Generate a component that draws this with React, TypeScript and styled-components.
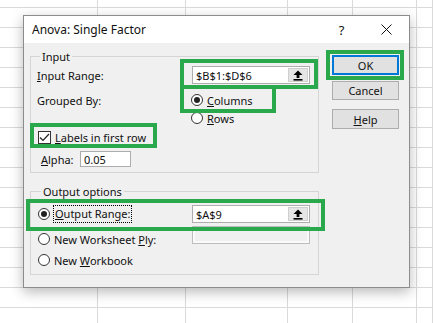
import * as React from 'react';
import styled, { createGlobalStyle } from 'styled-components';

const GlobalStyle = createGlobalStyle`
	html, body {
		margin: 0;
		padding: 0;
	}
	body {
		background: #fff;
		font-family: "Noto Sans", "Liberation Sans", sans-serif;
		color: #111;
	}
`;

const GREEN = '#2aa84c';

const Sheet = styled.div`
	position: relative;
	width: 433px;
	height: 323px;
	overflow: hidden;
	display: flex;
	background-color: #fff;
	background-image: linear-gradient(to bottom, transparent 19px, #dadada 19px);
	background-size: 100% 20px;
	background-position: 0 8px;
`;

const SheetColumn = styled.div<{ $width?: number }>`
	box-sizing: border-box;
	flex: ${(p) => (p.$width ? `0 0 ${p.$width}px` : '1 1 auto')};
	border-right: 1px solid #dadada;
	height: 100%;
`;

const Dialog = styled.div`
	position: absolute;
	left: 23px;
	top: 15px;
	width: 387px;
	height: 273px;
	box-sizing: border-box;
	border: 1px solid #8c8c8c;
	background: #f0f0f0;
	box-shadow: 0 4px 12px rgba(0, 0, 0, 0.28);
	display: flex;
	flex-direction: column;
`;

const TitleBar = styled.div`
	height: 27px;
	flex: 0 0 27px;
	background: #fff;
	display: flex;
	align-items: center;
	padding-left: 8px;
`;

const Title = styled.span`
	flex: 1;
	font-size: 12px;
`;

const TitleButton = styled.div`
	width: 45px;
	height: 27px;
	display: flex;
	align-items: center;
	justify-content: center;
	font-size: 13px;
	color: #111;
`;

const Body = styled.div`
	display: flex;
	padding: 6px 0 0 6px;
`;

const LeftColumn = styled.div`
	width: 289px;
	display: flex;
	flex-direction: column;
`;

const RightColumn = styled.div`
	width: 67px;
	margin-left: 13px;
	padding-top: 6px;
	display: flex;
	flex-direction: column;
`;

const Button = styled.div<{ $default?: boolean; $gap?: number; $height?: number }>`
	box-sizing: border-box;
	height: ${(p) => p.$height ?? 20}px;
	margin-top: ${(p) => p.$gap ?? 0}px;
	background: #e1e1e1;
	border: ${(p) => (p.$default ? '2px solid #0078d7' : '1px solid #adadad')};
	display: flex;
	align-items: center;
	justify-content: center;
	font-size: 11px;
`;

const Group = styled.fieldset<{ $pad: number; $gap?: number }>`
	margin: ${(p) => p.$gap ?? 0}px 0 0 0;
	padding: 0 0 5px ${(p) => p.$pad}px;
	border: 1px solid #d5d5d5;
	min-width: 0;
	font-size: 11px;
`;

const Legend = styled.legend`
	padding: 0 2px;
	margin-left: 3px;
	line-height: 15px;
	font-size: 11px;
`;

const Row = styled.div<{ $height: number; $gap?: number; $indent?: number; $align?: string }>`
	display: flex;
	align-items: ${(p) => p.$align ?? 'center'};
	height: ${(p) => p.$height}px;
	margin-top: ${(p) => p.$gap ?? 0}px;
	margin-left: ${(p) => p.$indent ?? 0}px;
`;

const FieldLabel = styled.div<{ $width?: number; $drop?: number }>`
	flex: 0 0 ${(p) => (p.$width ? `${p.$width}px` : 'auto')};
	display: flex;
	align-items: center;
	height: 18px;
	margin-top: ${(p) => p.$drop ?? 0}px;
	white-space: nowrap;
`;

const RadioStack = styled.div`
	display: flex;
	flex-direction: column;
	margin-left: -1px;
`;

const Option = styled.div`
	display: flex;
	align-items: center;
	gap: 4px;
	height: 18px;
	white-space: nowrap;
`;

const RadioCircle = styled.span<{ $checked?: boolean }>`
	box-sizing: border-box;
	width: 12px;
	height: 12px;
	border-radius: 50%;
	border: 1px solid #333;
	background: #fff;
	display: flex;
	align-items: center;
	justify-content: center;
	&::after {
		content: '';
		width: 6px;
		height: 6px;
		border-radius: 50%;
		background: ${(p) => (p.$checked ? '#222' : 'transparent')};
	}
`;

const CheckBox = styled.span`
	box-sizing: border-box;
	width: 13px;
	height: 13px;
	border: 1px solid #333;
	background: #fff;
	display: flex;
	align-items: center;
	justify-content: center;
`;

const Focus = styled.span`
	outline: 1px dotted #000;
	outline-offset: 0;
	padding: 0 1px;
	line-height: 16px;
`;

const TextField = styled.div<{ $width: number; $height: number; $disabled?: boolean }>`
	box-sizing: border-box;
	width: ${(p) => p.$width}px;
	height: ${(p) => p.$height}px;
	border: 1px solid ${(p) => (p.$disabled ? '#bdbdbd' : '#adadad')};
	background: ${(p) => (p.$disabled ? '#f0f0f0' : '#fff')};
	box-shadow: ${(p) => (p.$disabled ? 'inset 0 0 0 2px #fafafa' : 'none')};
	display: flex;
	align-items: center;
	padding-left: 3px;
	font-size: 11px;
	white-space: nowrap;
`;

const FieldText = styled.span`
	flex: 1;
`;

const CollapseButton = styled.span`
	box-sizing: border-box;
	width: 20px;
	height: calc(100% - 2px);
	margin-right: 1px;
	background: #e5e5e5;
	border: 1px solid #cfcfcf;
	display: flex;
	align-items: center;
	justify-content: center;
`;

const Highlight = styled.div<{ $x: number; $y: number; $w: number; $h: number }>`
	position: absolute;
	left: ${(p) => p.$x}px;
	top: ${(p) => p.$y}px;
	width: ${(p) => p.$w}px;
	height: ${(p) => p.$h}px;
	box-sizing: border-box;
	border: 4px solid ${GREEN};
	pointer-events: none;
`;

function UpArrow() {
	return (
		<svg width="10" height="11" viewBox="0 0 10 11">
			<path d="M5 0.5 L9.5 5 L6.4 5 L6.4 8 L3.6 8 L3.6 5 L0.5 5 Z" fill="#000" />
			<rect x="0.5" y="9" width="9" height="1.6" fill="#000" />
		</svg>
	);
}

function RefField({ value, disabled }: { value?: string; disabled?: boolean }) {
	return (
		<TextField $width={118} $height={18} $disabled={disabled}>
			<FieldText>{value}</FieldText>
			{!disabled && (
				<CollapseButton>
					<UpArrow />
				</CollapseButton>
			)}
		</TextField>
	);
}

function Radio({ checked, children }: { checked?: boolean; children: React.ReactNode }) {
	return (
		<Option>
			<RadioCircle $checked={checked} />
			{children}
		</Option>
	);
}

export default function App() {
	return (
		<Sheet>
			<GlobalStyle />
			<SheetColumn $width={98} />
			<SheetColumn $width={88} />
			<SheetColumn $width={102} />
			<SheetColumn $width={65} />
			<SheetColumn $width={64} />
			<SheetColumn />

			<Dialog>
				<TitleBar>
					<Title>Anova: Single Factor</Title>
					<TitleButton>?</TitleButton>
					<TitleButton>
						<svg width="11" height="11" viewBox="0 0 11 11">
							<path d="M0.5 0.5 L10.5 10.5 M10.5 0.5 L0.5 10.5" stroke="#111" strokeWidth="1" />
						</svg>
					</TitleButton>
				</TitleBar>
				<Body>
					<LeftColumn>
						<Group $pad={6}>
							<Legend>Input</Legend>
							<Row $height={18} $gap={2}>
								<FieldLabel $width={155}>
									<span>
										<u>I</u>nput Range:
									</span>
								</FieldLabel>
								<RefField value="$B$1:$D$6" />
							</Row>
							<Row $height={36} $gap={7} $align="flex-start">
								<FieldLabel $width={155}>Grouped By:</FieldLabel>
								<RadioStack>
									<Radio checked>
										<span>
											<u>C</u>olumns
										</span>
									</Radio>
									<Radio>
										<span>
											<u>R</u>ows
										</span>
									</Radio>
								</RadioStack>
							</Row>
							<Row $height={18} $gap={1} $indent={1}>
								<Option>
									<CheckBox>
										<svg width="11" height="9" viewBox="0 0 11 9">
											<path d="M1 4.5 L4 7.5 L10 1" fill="none" stroke="#222" strokeWidth="1.2" />
										</svg>
									</CheckBox>
									<span>
										<u>L</u>abels in first row
									</span>
								</Option>
							</Row>
							<Row $height={16} $gap={5} $indent={4}>
								<FieldLabel $width={39}>
									<span>
										<u>A</u>lpha:
									</span>
								</FieldLabel>
								<TextField $width={51} $height={16}>
									0.05
								</TextField>
							</Row>
						</Group>

						<Group $pad={7} $gap={11}>
							<Legend>Output options</Legend>
							<Row $height={20} $gap={5}>
								<FieldLabel $width={154}>
									<Radio checked>
										<Focus>
											<u>O</u>utput Range:
										</Focus>
									</Radio>
								</FieldLabel>
								<RefField value="$A$9" />
							</Row>
							<Row $height={22} $gap={2} $align="flex-start">
								<FieldLabel $width={154} $drop={4}>
									<Radio>
										<span>
											New Worksheet <u>P</u>ly:
										</span>
									</Radio>
								</FieldLabel>
								<RefField disabled />
							</Row>
							<Row $height={18} $gap={3}>
								<Radio>
									<span>
										New <u>W</u>orkbook
									</span>
								</Radio>
							</Row>
						</Group>
					</LeftColumn>

					<RightColumn>
						<Button $default>OK</Button>
						<Button $gap={6} $height={19}>
							Cancel
						</Button>
						<Button $gap={9}>
							<span>
								<u>H</u>elp
							</span>
						</Button>
					</RightColumn>
				</Body>
			</Dialog>

			<Highlight $x={180} $y={59} $w={138} $h={30} />
			<Highlight $x={180} $y={85} $w={96} $h={28} />
			<Highlight $x={326} $y={50} $w={78} $h={30} />
			<Highlight $x={30} $y={123} $w={127} $h={25} />
			<Highlight $x={26} $y={199} $w={299} $h={32} />
		</Sheet>
	);
}
